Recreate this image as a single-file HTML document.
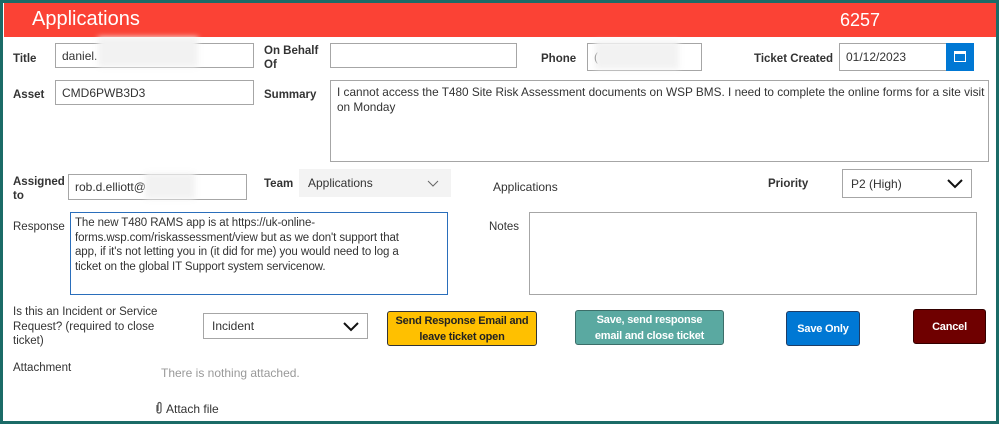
<!DOCTYPE html>
<html><head><meta charset="utf-8"><style>
*{box-sizing:border-box;margin:0;padding:0}
body{width:999px;height:424px;background:#1b6b67;position:relative;overflow:hidden;font-family:"Liberation Sans",sans-serif;font-size:12px;color:#222}
#w{position:absolute;left:3px;top:3px;width:993px;height:418px;background:#fff}
.a{position:absolute;white-space:nowrap}
.l{font-weight:bold;color:#333;font-size:11.5px}
.i{position:absolute;border:1px solid #a6a6a6;background:#fff;padding:0 6px;display:flex;align-items:center;font-size:12px;color:#333}
.b{position:absolute;border:1px solid #333;border-radius:3px;display:flex;align-items:center;justify-content:center;text-align:center;font-weight:bold;font-size:11px;line-height:16px;letter-spacing:-0.2px}
.blur{position:absolute;background:#f2f2f2;filter:blur(3px)}
</style></head><body><div id="w">
<div class="a" style="left:1px;top:0;width:992px;height:34px;background:#fb4235"></div>
<div class="a" style="left:29px;top:5px;color:#fff;font-size:20px">Applications</div>
<div class="a" style="left:837px;top:7px;color:#fff;font-size:18px">6257</div>

<div class="a l" style="left:10px;top:50px">Title</div>
<div class="i" style="left:52px;top:40px;width:199px;height:25px">daniel.</div>
<div class="blur" style="left:95px;top:34px;width:100px;height:30px"></div>
<div class="a l" style="left:261px;top:41px;line-height:14px;white-space:normal;width:60px">On Behalf Of</div>
<div class="i" style="left:327px;top:40px;width:187px;height:25px"></div>
<div class="a l" style="left:538px;top:50px">Phone</div>
<div class="i" style="left:584px;top:40px;width:115px;height:28px">(</div>
<div class="blur" style="left:592px;top:38px;width:84px;height:28px"></div>
<div class="a l" style="left:751px;top:50px">Ticket Created</div>
<div class="i" style="left:836px;top:40px;width:135px;height:28px">01/12/2023</div>
<div class="a" style="left:943px;top:40px;width:28px;height:28px;background:#0078d4"><div style="position:absolute;left:8px;top:8px;width:12px;height:11px;border:1.5px solid #fff;border-top-width:3px"></div></div>

<div class="a l" style="left:10px;top:86px">Asset</div>
<div class="i" style="left:52px;top:77px;width:199px;height:25px">CMD6PWB3D3</div>
<div class="a l" style="left:261px;top:86px">Summary</div>
<div class="i" style="left:327px;top:77px;width:659px;height:82px;align-items:flex-start;padding-top:4px;line-height:15px;white-space:nowrap;font-size:11.8px;letter-spacing:0;display:block">I cannot access the T480 Site Risk Assessment documents on WSP BMS. I need to complete the online forms for a site visit<br>on Monday</div>

<div class="a l" style="left:10px;top:172px;line-height:14px">Assigned<br>to</div>
<div class="i" style="left:65px;top:171px;width:179px;height:26px">rob.d.elliott@</div>
<div class="blur" style="left:142px;top:170px;width:50px;height:26px"></div>
<div class="a l" style="left:261px;top:175px">Team</div>
<div class="i" style="left:296px;top:166px;width:152px;height:28px;background:#f3f3f3;border:none;padding-left:9px">Applications<svg style="position:absolute;right:12px;top:11px" width="12" height="7"><path d="M1 1l5 5 5-5" stroke="#666" stroke-width="1" fill="none"/></svg></div>
<div class="a" style="left:490px;top:177px;color:#333">Applications</div>
<div class="a l" style="left:765px;top:175px">Priority</div>
<div class="i" style="left:839px;top:166px;width:130px;height:29px;padding-left:8px">P2 (High)<svg style="position:absolute;right:8px;top:9px" width="16" height="10"><path d="M1 1l7 7 7-7" stroke="#111" stroke-width="2" fill="none"/></svg></div>

<div class="a" style="left:10px;top:218px;color:#333;font-size:11.5px">Response</div>
<div class="i" style="left:67px;top:209px;width:378px;height:83px;border-color:#2a6ebb;align-items:flex-start;padding:3px 4px;line-height:14.5px;white-space:nowrap;font-size:11.5px;letter-spacing:-0.1px;display:block">The new T480 RAMS app is at https://uk-online-<br>forms.wsp.com/riskassessment/view but as we don't support that<br>app, if it's not letting you in (it did for me) you would need to log a<br>ticket on the global IT Support system servicenow.</div>
<div class="a" style="left:486px;top:218px;color:#333;font-size:11.5px">Notes</div>
<div class="i" style="left:526px;top:209px;width:448px;height:83px"></div>

<div class="a" style="left:10px;top:302px;line-height:14.5px;color:#333;font-size:11.5px">Is this an Incident or Service<br>Request? (required to close<br>ticket)</div>
<div class="i" style="left:200px;top:310px;width:165px;height:26px;padding-left:8px">Incident<svg style="position:absolute;right:8px;top:8px" width="16" height="10"><path d="M1 1l7 7 7-7" stroke="#111" stroke-width="2" fill="none"/></svg></div>
<div class="b" style="left:384px;top:308px;width:150px;height:35px;background:#ffc000;color:#222">Send Response Email and<br>leave ticket open</div>
<div class="b" style="left:572px;top:307px;width:149px;height:35px;background:#5aa9a1;color:#fff;border-color:#3c6e69">Save, send response<br>email and close ticket</div>
<div class="b" style="left:783px;top:308px;width:74px;height:35px;background:#0078d4;color:#fff;border-color:#1e3d66">Save Only</div>
<div class="b" style="left:910px;top:306px;width:73px;height:35px;background:#6f0000;color:#fff;border-color:#300">Cancel</div>

<div class="a" style="left:10px;top:359px;color:#333;font-size:11.5px">Attachment</div>
<div class="a" style="left:158px;top:363px;color:#999">There is nothing attached.</div>
<div class="a" style="left:152px;top:398px;color:#333"><svg width="8" height="14" style="vertical-align:-2px;margin-right:3px"><path d="M2 4v6a2 2 0 0 0 4 0V3a1.5 1.5 0 0 0-3 0v7" stroke="#555" stroke-width="1.2" fill="none"/></svg>Attach file</div>
</div></body></html>
